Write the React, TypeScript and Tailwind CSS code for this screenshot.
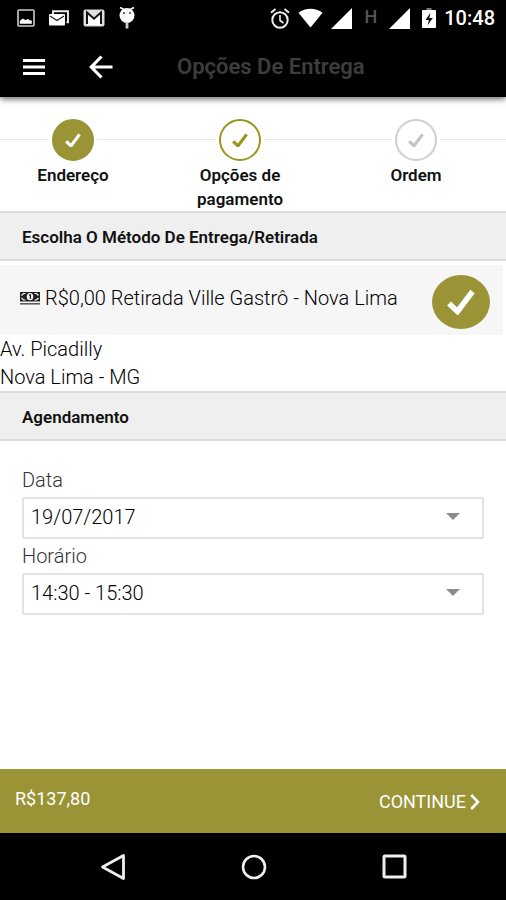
import { useState } from 'react';

interface IconProps {
  className?: string;
}

function PictureIcon() {
  return (
    <svg width="18" height="18" viewBox="0 0 18 18">
      <rect x="1" y="1" width="16" height="16" rx="1" fill="none" stroke="#ccc" strokeWidth="1.6" />
      <path d="M2.800 14.800V12l3-2.500 2.500 1.500 3-1 1.500 1.500h2v3.300z" fill="#fff" />
    </svg>
  );
}

function MailStackIcon() {
  return (
    <svg width="20" height="16" viewBox="0 0 20 16">
      <path d="M4 4V1.200h15v11h-1.500" fill="none" stroke="#eee" strokeWidth="1.900" />
      <rect x="0" y="4" width="16" height="11.500" rx="1" fill="#fff" />
      <path d="M1 6l7 4.500L15 6" fill="none" stroke="#222" strokeWidth="1.300" />
    </svg>
  );
}

function GmailIcon() {
  return (
    <svg width="22" height="18" viewBox="0 0 22 18">
      <rect x="0.500" y="0.500" width="21" height="17" rx="2" fill="#ddd" />
      <path d="M4 16V4l7 6 7-6v12z" fill="#fff" />
      <path d="M4 15V3.500l7 6.200 7-6.200V15" fill="none" stroke="#111" strokeWidth="2" />
    </svg>
  );
}

function DroidIcon() {
  return (
    <svg width="16" height="24" viewBox="0 0 16 24">
      <path d="M1 1.500l4 2M15 1.500l-4 2" stroke="#fff" strokeWidth="1.600" />
      <ellipse cx="8" cy="9.500" rx="7.500" ry="7.500" fill="#fff" />
      <circle cx="5" cy="7" r="0.900" fill="#222" />
      <circle cx="11" cy="7" r="0.900" fill="#222" />
      <path d="M8 16v6.500" stroke="#ccc" strokeWidth="2.800" />
    </svg>
  );
}

function AlarmIcon() {
  return (
    <svg width="20" height="21" viewBox="0 0 20 21" fill="none" stroke="#eee" strokeWidth="2">
      <circle cx="10" cy="12" r="7.700" />
      <path d="M10 7v5.500l3.500 2.500" strokeWidth="1.600" />
      <path d="M1 4.800L5.500 1M19 4.800L14.500 1" />
    </svg>
  );
}

function WifiIcon() {
  return (
    <svg width="25" height="20" viewBox="0 0 26 20" fill="#fff">
      <path d="M0.500 4.500C7.500-1 18.500-1 25.500 4.500L13 20z" />
    </svg>
  );
}

function SignalIcon() {
  return (
    <svg width="21" height="21" viewBox="0 0 21 21" fill="#fff">
      <path d="M21 0v21H0z" />
    </svg>
  );
}

function BatteryIcon() {
  return (
    <svg width="14" height="20" viewBox="0 0 14 20">
      <path d="M4.500 0h5v2h-5z" fill="#777" />
      <rect y="2" width="14" height="18" rx="1" fill="#fff" />
      <path d="M8.500 4.500L3.500 12H7l-1.500 5.500L10.800 10H7.300z" fill="#111" />
    </svg>
  );
}

function MenuIcon() {
  return (
    <svg width="22" height="16" viewBox="0 0 22 16" fill="#fff">
      <path d="M0 0h22v3H0zM0 6.500h22v3H0zM0 13h22v3H0z" />
    </svg>
  );
}

function BackIcon() {
  return (
    <svg width="24" height="24" viewBox="0 0 24 24" fill="none" stroke="#fff" strokeWidth="3.200">
      <path d="M23.500 12H3M12.500 1.500L2.300 12l10.200 10.500" />
    </svg>
  );
}

function CheckIcon({ className }: IconProps) {
  return (
    <svg viewBox="0 0 28 26" fill="none" stroke="currentColor" strokeWidth="5.500" className={className}>
      <path d="M2 14.500l8.500 8L25.500 2.500" />
    </svg>
  );
}

function MoneyIcon() {
  return (
    <svg width="20" height="13" viewBox="0 0 20 13">
      <rect width="20" height="9.500" fill="#222" />
      <ellipse cx="10" cy="4.700" rx="3.200" ry="3.600" fill="#f6f6f6" />
      <path d="M9 3h1.400v4" fill="none" stroke="#222" strokeWidth="1.300" />
      <path d="M1.500 3.500L3.500 1.500h2M1.500 6l2 2h2M18.500 3.500l-2-2h-2M18.500 6l-2 2h-2" fill="none" stroke="#f6f6f6" strokeWidth="1.200" />
      <path d="M0 11.800h20" stroke="#555" strokeWidth="1.500" />
    </svg>
  );
}

const steps = [
  { label: 'Endereço', circle: 'border-[#9a9437] bg-[#9a9437] text-white' },
  { label: 'Opções de pagamento', circle: 'border-[#9a941f] bg-white text-[#9a941f]' },
  { label: 'Ordem', circle: 'border-[#cfcfcf] bg-white text-[#c4c4c4]' },
];

function StatusBar() {
  return (
    <div className="flex h-9 items-center justify-between pr-[11px] pl-[17px]">
      <div className="flex items-center gap-[14px]">
        <PictureIcon />
        <MailStackIcon />
        <GmailIcon />
        <DroidIcon />
      </div>
      <div className="flex items-center gap-2">
        <AlarmIcon />
        <WifiIcon />
        <SignalIcon />
        <span className="mx-1 self-start pt-1 text-lg leading-none font-medium text-[#555]">H</span>
        <SignalIcon />
        <span className="ml-1"><BatteryIcon /></span>
        <span className="text-xl font-medium text-white">10:48</span>
      </div>
    </div>
  );
}

function Stepper() {
  return (
    <ol className="relative grid grid-cols-[146fr_188fr_164fr] pt-[22px] pr-2">
      <li aria-hidden="true" className="absolute inset-x-0 top-[42px] h-px bg-[#e6e6e6]" />
      {steps.map((step) => (
        <li key={step.label} className="relative flex flex-col items-center gap-0.5">
          <span className={`flex size-[42px] items-center justify-center rounded-full border-2 ring-3 ring-white ${step.circle}`}>
            <CheckIcon className="w-4" />
          </span>
          <span className="w-24 text-center text-[17px] leading-6 font-semibold">{step.label}</span>
        </li>
      ))}
    </ol>
  );
}

function SectionTitle({ children }: { children: React.ReactNode }) {
  return (
    <h2 className="border-y-2 border-[#dcdcdc] bg-[#efefef] px-[22px] pt-3 pb-2.5 text-[17px] leading-6 font-semibold">
      {children}
    </h2>
  );
}

interface SelectFieldProps {
  id: string;
  label: string;
  value: string;
  options: string[];
  onChange: (value: string) => void;
}

function SelectField({ id, label, value, options, onChange }: SelectFieldProps) {
  return (
    <div>
      <label htmlFor={id} className="block text-xl leading-[34px] font-light text-[#333]">{label}</label>
      <div className="relative">
        <select
          id={id}
          value={value}
          onChange={(e) => onChange(e.target.value)}
          className="block h-[42px] w-full appearance-none rounded-xs border-2 border-[#e2e2e2] bg-white px-[7px] pb-0.5 text-xl font-light text-black"
        >
          {options.map((option) => <option key={option}>{option}</option>)}
        </select>
        <svg width="14" height="7" viewBox="0 0 14 7" className="pointer-events-none absolute top-4 right-6" fill="#8c8c8c">
          <path d="M0 0h14L7 7z" />
        </svg>
      </div>
    </div>
  );
}

export default function App() {
  const [date, setDate] = useState('19/07/2017');
  const [time, setTime] = useState('14:30 - 15:30');

  return (
    <div className="flex min-h-screen flex-col bg-white font-[Roboto,sans-serif] text-[#111]">
      <header className="relative z-10 bg-black shadow-[0_2px_6px_rgba(0,0,0,0.6)]">
        <StatusBar />
        <div className="flex h-[61px] items-center pl-[23px]">
          <button aria-label="Menu"><MenuIcon /></button>
          <button aria-label="Voltar" className="ml-11"><BackIcon /></button>
          <h1 className="ml-16 text-[22px] font-semibold text-[#3d3d3d]">Opções De Entrega</h1>
        </div>
      </header>

      <main className="flex-1">
        <Stepper />
        <SectionTitle>Escolha O Método De Entrega/Retirada</SectionTitle>
        <button className="mt-1 mr-[3px] flex h-[70px] w-[calc(100%-3px)] items-center bg-[#f6f6f6] pt-1 pr-[13px] pl-5 text-left">
          <span className="flex flex-1 items-center gap-[5px] pb-2">
            <MoneyIcon />
            <span className="text-xl font-light text-black">R$0,00 Retirada Ville Gastrô - Nova Lima</span>
          </span>
          <span className="flex h-[54px] w-[58px] items-center justify-center rounded-[50%] bg-[#9a9437] text-white">
            <CheckIcon className="w-7" />
          </span>
        </button>
        <address className="text-xl leading-7 font-light text-black not-italic">
          Av. Picadilly<br />
          Nova Lima - MG
        </address>
        <SectionTitle>Agendamento</SectionTitle>
        <form className="px-[22px] pt-[22px] pb-6">
          <SelectField id="date" label="Data" value={date} options={['19/07/2017', '20/07/2017']} onChange={setDate} />
          <SelectField id="time" label="Horário" value={time} options={['14:30 - 15:30', '15:30 - 16:30']} onChange={setTime} />
        </form>
      </main>

      <footer>
        <div className="flex h-16 items-center justify-between bg-[#9a9437] pr-[26px] pl-[15px] text-lg text-white">
          <span className="pb-1">R$137,80</span>
          <button className="flex items-center gap-1 pt-0.5">
            CONTINUE
            <svg width="10" height="16" viewBox="0 0 10 16" fill="none" stroke="currentColor" strokeWidth="2.600">
              <path d="M1.200 1L8 8l-6.800 7" />
            </svg>
          </button>
        </div>
        <nav className="flex h-[67px] items-center justify-center gap-[115px] bg-black">
          <button aria-label="Voltar">
            <svg width="26" height="28" viewBox="0 0 26 28" fill="none" stroke="#eee" strokeWidth="2.800" strokeLinejoin="round">
              <path d="M23.500 2.500v23L2.500 14z" />
            </svg>
          </button>
          <button aria-label="Início">
            <svg width="26" height="26" viewBox="0 0 26 26" fill="none" stroke="#eee" strokeWidth="2.600">
              <circle cx="13" cy="13" r="11" />
            </svg>
          </button>
          <button aria-label="Recentes">
            <svg width="25" height="25" viewBox="0 0 25 25" fill="none" stroke="#eee" strokeWidth="3">
              <rect x="2" y="2" width="21" height="21" rx="1" />
            </svg>
          </button>
        </nav>
      </footer>
    </div>
  );
}
